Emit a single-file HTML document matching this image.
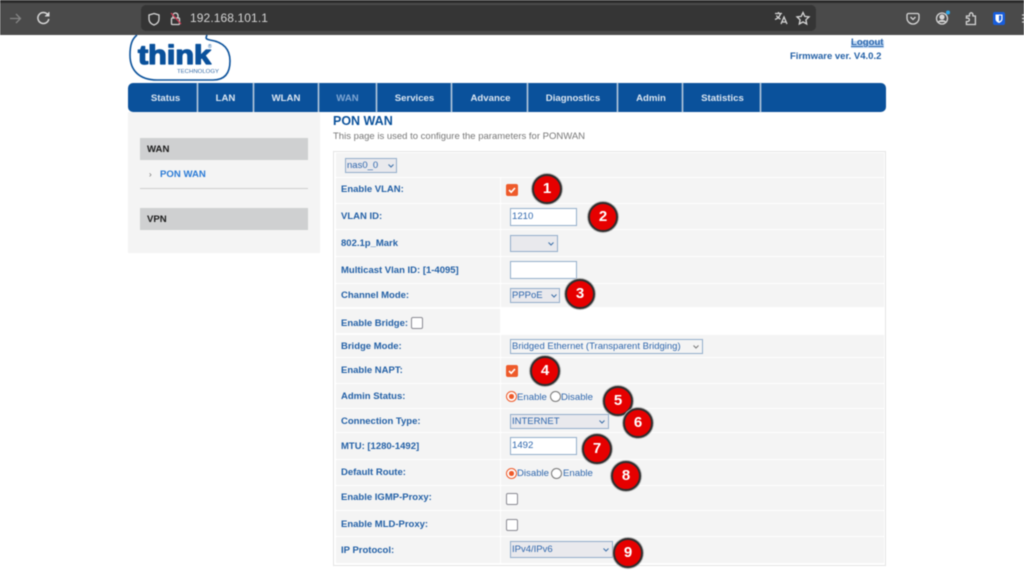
<!DOCTYPE html>
<html><head><meta charset="utf-8"><style>
*{box-sizing:border-box}
html,body{margin:0;padding:0;background:#fff;width:1024px;height:571px;overflow:hidden;font-family:"Liberation Sans",sans-serif}
#w{position:absolute;left:0;top:0;width:1024px;height:571px;filter:blur(.4px);background:#fff;overflow:hidden}
.a{position:absolute}
.top{left:0;top:0;width:1024px;height:35px;background:#4a4a4a}
.top .bar{left:0;top:0;width:1024px;height:3px;background:#2b2b2b}
.url{left:141px;top:5px;width:675px;height:26px;background:#353535;border-radius:5px}
.urlt{left:190px;top:11px;font-size:12px;color:#d4d4d4;letter-spacing:.1px}
.nav{left:128px;top:83px;width:758px;height:29px;background:#0a519b;border-radius:5px}
.sep{top:83px;width:1px;height:29px;background:#b6c9dd;box-shadow:0 0 0 .3px #b6c9dd}
.n{top:84px;height:29px;line-height:29px;font-size:9.6px;font-weight:bold;color:#dce6f1;text-align:center}
.side{left:128px;top:112px;width:192px;height:141px;background:#f4f4f4}
.shead{left:140px;width:168px;height:22px;background:#cfd0d1;font-size:9.6px;font-weight:bold;color:#1c1c1c;line-height:23px;padding-left:7px}
.tbl{left:333px;top:151px;width:553px;height:415px;border:1.5px solid #e4e4e4;background:#fff}
.rl,.rv{position:absolute;background:#f4f4f4}
.l{position:absolute;left:341px;margin-top:1px;font-size:9.5px;line-height:12px;font-weight:bold;color:#2360a6;white-space:nowrap}
.inp{position:absolute;background:#fff;border:1px solid #93aecb;height:18px;width:67px;left:510px;font-size:9.6px;color:#2f67ad;line-height:16px;padding-left:1px}
.sel{position:absolute;background:#e9e9ed;border:1px solid #93aecb;height:15px;font-size:9.5px;color:#2f67ad;line-height:13px;padding-left:1px;white-space:nowrap}
.sel svg{position:absolute;top:4px}
.cb{position:absolute;left:506px;width:11.5px;height:11.5px;border-radius:2px;border:1.3px solid #8a8a92;background:#fff}
.cb.on{background:#ee5a2a;border:none;width:12px;height:12px}
.cb svg{position:absolute;left:0;top:0}
.r{position:absolute;width:11px;height:11px;border-radius:50%;border:1.3px solid #777;background:#fff}
.r.on{border:1.4px solid #ee5a2a}
.r.on::after{content:"";position:absolute;left:2px;top:2px;width:4.5px;height:4.5px;border-radius:50%;background:#ee5a2a}
.t{position:absolute;font-size:9.6px;color:#2f67ad;white-space:nowrap}
.b{position:absolute;width:30px;height:30px;border-radius:50%;background:#e60000;border:2px solid #2e2e2e;box-shadow:0 0 0 1px #b5b5b5;color:#fff;font-size:15px;font-weight:bold;text-align:center;line-height:26px}
</style></head><body><div id="w">
<div class="a top"><div class="a bar"></div></div>
<div class="a url"></div>
<svg class="a" style="left:0;top:0" width="1024" height="35" fill="none" stroke="#d6d6d6" stroke-width="1.3">
<path d="M10 18.500H20M16 14l4.500 4.500-4.500 4.500" stroke="#858585"/>
<path d="M48 15a5.500 5.500 0 1 0 .8 4" stroke-width="1.500"/><path d="M49 12v4h-4" fill="#d6d6d6" stroke-width="1"/>
<path d="M154 13.500l5 1.500v4c0 3-2.200 5-5 6-2.800-1-5-3-5-6v-4z"/>
<rect x="171.500" y="18" width="8" height="6.500" rx="1"/><path d="M173 18v-2.500a2.500 2.500 0 0 1 5 0V18"/><path d="M171 13l10 11" stroke="#d23a55"/>
<path d="M775 13.500h7M778.500 12v1.500M780.500 13.500c-.5 3-3 5-5.500 6M776.500 15.500c1 2 2.500 3 4 3.500M781 24l3-7 3 7M782 22h4"/>
<path d="M803 12.500l1.800 3.900 4.200.5-3.100 2.900.8 4.200-3.700-2.100-3.700 2.100.8-4.200-3.100-2.900 4.200-.5z"/>
<path d="M908.500 13.500h9a1.500 1.500 0 0 1 1.500 1.500v3a6 6 0 0 1-12 0v-3a1.500 1.500 0 0 1 1.500-1.500z"/><path d="M910.500 17l2.500 2.500 2.500-2.500"/>
<circle cx="942" cy="18.500" r="5.500"/><circle cx="942" cy="17" r="2" fill="#d6d6d6"/><path d="M938.500 22c1-1.800 6-1.800 7 0" fill="#d6d6d6"/>
<path d="M966.500 16h3v-1.500a1.700 1.700 0 0 1 3.400 0V16h2.500v8.500h-9v-3h1.300a1.700 1.700 0 0 0 0-3.400h-1.300z"/>
<rect x="993" y="12" width="12" height="13" rx="2" fill="#175ddc" stroke="none"/><path d="M995.500 14.500h7v4.500c0 2-1.800 3.300-3.500 4-1.700-.7-3.500-2-3.500-4z" fill="#fff" stroke="none"/><path d="M999 15.500h2.300v3.500c0 1-1.200 2-2.300 2.500z" fill="#175ddc" stroke="none"/>
<circle cx="948" cy="12.500" r="2" fill="#2aa5e8" stroke="none"/>
<path d="M1022 15h2M1022 18.500h2M1022 22h2"/>
</svg>
<div class="a urlt">192.168.101.1</div>

<svg class="a" style="left:125px;top:35px" width="110" height="47" viewBox="0 0 110 47" fill="none">
<path d="M12 0C7 4 5 10 5 20 5 36 15 45 32 45H88C100 45 105 38 105 26 105 14 98 7 85 5L83 4.500C82 4 80 4 82 0" stroke="#0a519b" stroke-width="1.600"/>
<text x="13" y="29" font-family="Liberation Sans,sans-serif" font-weight="bold" font-size="27" fill="#0a519b" stroke="#0a519b" stroke-width="1.300" stroke-linejoin="round" textLength="73" lengthAdjust="spacingAndGlyphs">think</text>
<text x="52" y="38" font-family="Liberation Sans,sans-serif" font-size="5.500" fill="#3a6ea8" textLength="42" lengthAdjust="spacingAndGlyphs">TECHNOLOGY</text>
<text x="83" y="13" font-family="Liberation Sans,sans-serif" font-size="5" fill="#0a519b">®</text>
</svg>
<div class="a" style="left:851px;top:37px;font-size:9.6px;font-weight:bold;color:#2a66ad;text-decoration:underline;background:linear-gradient(#fff 35%,#c2d9f3 35%);line-height:11px">Logout</div>
<div class="a" style="left:790px;top:51px;font-size:9.5px;font-weight:bold;color:#2360a6;white-space:nowrap;line-height:12px">Firmware ver. V4.0.2</div>

<div class="a nav"></div>
<div class="a n" style="left:131px;width:69px">Status</div>
<div class="a n" style="left:198px;width:55px">LAN</div>
<div class="a n" style="left:254px;width:64px">WLAN</div>
<div class="a n" style="left:319px;width:57px;color:#7fa6d3">WAN</div>
<div class="a n" style="left:377px;width:75px">Services</div>
<div class="a n" style="left:453px;width:75px">Advance</div>
<div class="a n" style="left:528px;width:90px">Diagnostics</div>
<div class="a n" style="left:619px;width:64px">Admin</div>
<div class="a n" style="left:684px;width:77px">Statistics</div>
<div class="a sep" style="left:197px"></div><div class="a sep" style="left:253px"></div><div class="a sep" style="left:318px"></div><div class="a sep" style="left:376px"></div><div class="a sep" style="left:451px"></div><div class="a sep" style="left:527px"></div><div class="a sep" style="left:617px"></div><div class="a sep" style="left:682px"></div><div class="a sep" style="left:760px"></div>

<div class="a side"></div>
<div class="a shead" style="top:138px">WAN</div>
<div class="a" style="left:149px;top:171px;font-size:8px;color:#666;line-height:8px">&#8250;</div>
<div class="a" style="left:160px;top:169px;font-size:9.6px;font-weight:bold;color:#2b7bd6;line-height:12px">PON WAN</div>
<div class="a" style="left:140px;top:188px;width:168px;height:1px;background:#cfcfcf"></div>
<div class="a shead" style="top:208px">VPN</div>

<div class="a" style="left:333px;top:114px;font-size:12.5px;font-weight:bold;color:#0a519b;line-height:15px">PON WAN</div>
<div class="a" style="left:333px;top:131px;font-size:9.5px;color:#777;line-height:12px;white-space:nowrap">This page is used to configure the parameters for PONWAN</div>

<div class="a tbl"></div>
<div class="rl" style="left:336px;top:153px;width:548px;height:24px"></div>
<div class="rl" style="left:336px;top:178px;width:164px;height:25px"></div><div class="rv" style="left:501px;top:178px;width:383px;height:25px"></div>
<div class="rl" style="left:336px;top:204px;width:164px;height:25px"></div><div class="rv" style="left:501px;top:204px;width:383px;height:25px"></div>
<div class="rl" style="left:336px;top:230px;width:164px;height:26px"></div><div class="rv" style="left:501px;top:230px;width:383px;height:26px"></div>
<div class="rl" style="left:336px;top:257px;width:164px;height:26px"></div><div class="rv" style="left:501px;top:257px;width:383px;height:26px"></div>
<div class="rl" style="left:336px;top:284px;width:164px;height:23px"></div><div class="rv" style="left:501px;top:284px;width:383px;height:23px"></div>
<div class="rl" style="left:336px;top:309px;width:164px;height:24px"></div>
<div class="rl" style="left:336px;top:335px;width:164px;height:22px"></div><div class="rv" style="left:501px;top:335px;width:383px;height:22px"></div>
<div class="rl" style="left:336px;top:358px;width:164px;height:25px"></div><div class="rv" style="left:501px;top:358px;width:383px;height:25px"></div>
<div class="rl" style="left:336px;top:384px;width:164px;height:24px"></div><div class="rv" style="left:501px;top:384px;width:383px;height:24px"></div>
<div class="rl" style="left:336px;top:409px;width:164px;height:23px"></div><div class="rv" style="left:501px;top:409px;width:383px;height:23px"></div>
<div class="rl" style="left:336px;top:433px;width:164px;height:26px"></div><div class="rv" style="left:501px;top:433px;width:383px;height:26px"></div>
<div class="rl" style="left:336px;top:460px;width:164px;height:25px"></div><div class="rv" style="left:501px;top:460px;width:383px;height:25px"></div>
<div class="rl" style="left:336px;top:486px;width:164px;height:24px"></div><div class="rv" style="left:501px;top:486px;width:383px;height:24px"></div>
<div class="rl" style="left:336px;top:511px;width:164px;height:25px"></div><div class="rv" style="left:501px;top:511px;width:383px;height:25px"></div>
<div class="rl" style="left:336px;top:537px;width:164px;height:26px"></div><div class="rv" style="left:501px;top:537px;width:383px;height:26px"></div>

<div class="sel" style="left:345px;top:158px;width:52px">nas0_0<svg style="left:41px" width="8" height="6" fill="none" stroke="#3a6ea8"><path d="M1.500 1.500l2.500 2.500 2.500-2.500"/></svg></div>
<div class="l" style="top:183px">Enable VLAN:</div>
<div class="cb on" style="top:184px"><svg width="12" height="12" fill="none" stroke="#fff" stroke-width="1.600"><path d="M3 6l2.200 2.200 3.800-4.200"/></svg></div>
<div class="l" style="top:210px">VLAN ID:</div><div class="inp" style="top:208px">1210</div>
<div class="l" style="top:237px">802.1p_Mark</div>
<div class="sel" style="left:510px;top:235px;width:48px;height:17px"><svg style="left:36px;top:5px" width="8" height="6" fill="none" stroke="#3a6ea8"><path d="M1.500 1.500l2.500 2.500 2.500-2.500"/></svg></div>
<div class="l" style="top:264px">Multicast Vlan ID: [1-4095]</div><div class="inp" style="top:261px"></div>
<div class="l" style="top:289px">Channel Mode:</div>
<div class="sel" style="left:510px;top:288px;width:50px">PPPoE<svg style="left:39px" width="8" height="6" fill="none" stroke="#3a6ea8"><path d="M1.500 1.500l2.500 2.500 2.500-2.500"/></svg></div>
<div class="l" style="top:317px">Enable Bridge:</div><div class="cb" style="left:411px;top:317px"></div>
<div class="l" style="top:340px">Bridge Mode:</div>
<div class="sel" style="left:510px;top:339px;width:193px;background:#f4f4f4">Bridged Ethernet (Transparent Bridging)<svg style="left:181px" width="8" height="6" fill="none" stroke="#777"><path d="M1.500 1.500l2.500 2.500 2.500-2.500"/></svg></div>
<div class="l" style="top:364px">Enable NAPT:</div>
<div class="cb on" style="top:365px"><svg width="12" height="12" fill="none" stroke="#fff" stroke-width="1.600"><path d="M3 6l2.200 2.200 3.800-4.200"/></svg></div>
<div class="l" style="top:390px">Admin Status:</div>
<div class="r on" style="left:506px;top:391px"></div><div class="t" style="left:517px;top:392px">Enable</div>
<div class="r" style="left:550px;top:391px"></div><div class="t" style="left:561px;top:392px">Disable</div>
<div class="l" style="top:415px">Connection Type:</div>
<div class="sel" style="left:510px;top:414px;width:99px">INTERNET<svg style="left:87px" width="8" height="6" fill="none" stroke="#3a6ea8"><path d="M1.500 1.500l2.500 2.500 2.500-2.500"/></svg></div>
<div class="l" style="top:440px">MTU: [1280-1492]</div><div class="inp" style="top:437px">1492</div>
<div class="l" style="top:466px">Default Route:</div>
<div class="r on" style="left:506px;top:468px"></div><div class="t" style="left:517px;top:468px">Disable</div>
<div class="r" style="left:551px;top:468px"></div><div class="t" style="left:563px;top:468px">Enable</div>
<div class="l" style="top:491px">Enable IGMP-Proxy:</div><div class="cb" style="top:493px"></div>
<div class="l" style="top:518px">Enable MLD-Proxy:</div><div class="cb" style="top:519px"></div>
<div class="l" style="top:544px">IP Protocol:</div>
<div class="sel" style="left:510px;top:541px;width:103px;height:17px;line-height:15px">IPv4/IPv6<svg style="left:91px;top:5px" width="8" height="6" fill="none" stroke="#3a6ea8"><path d="M1.500 1.500l2.500 2.500 2.500-2.500"/></svg></div>

<div class="b" style="left:532px;top:174px">1</div>
<div class="b" style="left:588px;top:202px">2</div>
<div class="b" style="left:565px;top:279px">3</div>
<div class="b" style="left:530px;top:356px">4</div>
<div class="b" style="left:603px;top:386px">5</div>
<div class="b" style="left:623px;top:408px">6</div>
<div class="b" style="left:582px;top:434px">7</div>
<div class="b" style="left:611px;top:461px">8</div>
<div class="b" style="left:613px;top:538px">9</div>
</div></body></html>
